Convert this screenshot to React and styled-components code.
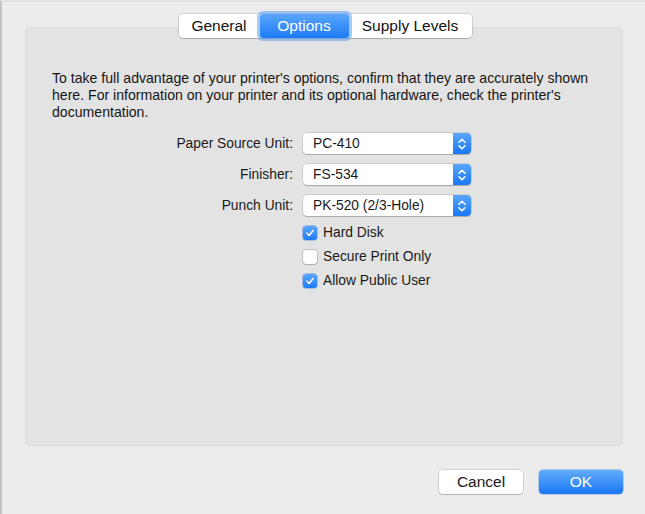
import styled, { createGlobalStyle } from 'styled-components'

const Global = createGlobalStyle`
    html, body {
        margin: 0;
        padding: 0;
        background: #ececec;
    }
    body {
        font-family: "Liberation Sans", Arial, sans-serif;
        color: #1a1a1a;
    }
`

const Window = styled.div`
    width: 645px;
    height: 514px;
    box-sizing: border-box;
    background: #ececec;
    border-top: 2px solid #e0e0e0;
    border-left: 2px solid #c4c4c4;
    padding: 11px 22px 0 23px;
    display: flex;
    flex-direction: column;
    position: relative;
`

const TabBar = styled.div`
    position: absolute;
    top: 12px;
    left: 0;
    right: 0;
    display: flex;
    justify-content: center;
    padding-left: 3px;
`

const Segments = styled.div`
    display: flex;
    height: 24px;
    background: #fff;
    border-radius: 4px;
    box-shadow: 0 0 0 0.5px rgba(0,0,0,0.22), 0 1px 1px rgba(0,0,0,0.15);
`

const Segment = styled.div`
    display: flex;
    align-items: center;
    justify-content: center;
    width: ${p => p.$w}px;
    font-size: 15.5px;
    color: ${p => p.$active ? '#fff' : '#111'};
    background: ${p => p.$active ? 'linear-gradient(#5aa6fb, #1d7cf6)' : 'transparent'};
    border-radius: ${p => p.$active ? '3px' : '0'};
    box-shadow: ${p => p.$active ? '0 0 0 3px rgba(92,158,240,0.55)' : 'none'};
    position: relative;
    z-index: ${p => p.$active ? 1 : 0};
`

const Panel = styled.div`
    margin-top: 14px;
    height: 419px;
    box-sizing: border-box;
    background: #e3e3e3;
    border: 1px solid #dcdcdc;
    border-radius: 5px;
    padding: 42px 20px 0 26px;
`

const Intro = styled.p`
    margin: 0;
    font-size: 14.1px;
    line-height: 17px;
    color: #161616;
`

const Form = styled.div`
    margin-top: 12px;
    display: grid;
    grid-template-columns: 241px 168px;
    column-gap: 10px;
    row-gap: 10px;
    align-items: center;
`

const Label = styled.label`
    text-align: right;
    font-size: 13.8px;
`

const Popup = styled.div`
    height: 21px;
    display: flex;
    background: #fff;
    border-radius: 4px;
    box-shadow: 0 0 0 0.5px rgba(0,0,0,0.2), 0 1px 1px rgba(0,0,0,0.18);
    overflow: hidden;
    font-size: 13.8px;
`

const PopupValue = styled.div`
    flex: 1;
    display: flex;
    align-items: center;
    padding-left: 10px;
`

const PopupArrows = styled.div`
    width: 18px;
    display: flex;
    align-items: center;
    justify-content: center;
    background: linear-gradient(#5aa6fb, #1a78f5);
`

const Checks = styled.div`
    grid-column: 2;
    display: flex;
    flex-direction: column;
    gap: 9px;
    margin-top: -1px;
`

const CheckRow = styled.div`
    display: flex;
    align-items: center;
    gap: 6px;
    font-size: 13.8px;
    height: 15px;
`

const Box = styled.div`
    width: 14px;
    height: 14px;
    box-sizing: border-box;
    border-radius: 3px;
    display: flex;
    align-items: center;
    justify-content: center;
    background: ${p => p.$on ? 'linear-gradient(#5aa6fb, #1d7cf6)' : '#fff'};
    box-shadow: ${p => p.$on ? '0 0 0 0.5px rgba(20,100,220,0.6)' : '0 0 0 0.5px rgba(0,0,0,0.3), 0 1px 1px rgba(0,0,0,0.1)'};
`

const Footer = styled.div`
    display: flex;
    justify-content: flex-end;
    gap: 16px;
    margin-top: 24px;
`

const Button = styled.div`
    width: 84px;
    height: 24px;
    display: flex;
    align-items: center;
    justify-content: center;
    border-radius: 4px;
    font-size: 15.5px;
    color: ${p => p.$primary ? '#fff' : '#1a1a1a'};
    background: ${p => p.$primary ? 'linear-gradient(#62abfb, #1a78f5)' : '#fff'};
    box-shadow: ${p => p.$primary ? '0 0 0 0.5px rgba(20,100,220,0.5)' : '0 0 0 0.5px rgba(0,0,0,0.22), 0 1px 1px rgba(0,0,0,0.15)'};
`

const Arrows = () => (
    <svg width="10" height="14" viewBox="0 0 10 14">
        <path d="M2 5.2 L5 2.2 L8 5.2 M2 8.8 L5 11.8 L8 8.8" fill="none" stroke="#fff" strokeWidth="1.5" strokeLinecap="round" strokeLinejoin="round" />
    </svg>
)

const Tick = () => (
    <svg width="10" height="10" viewBox="0 0 10 10">
        <path d="M2 5.2 L4.2 7.5 L8 2.5" fill="none" stroke="#fff" strokeWidth="1.6" strokeLinecap="round" strokeLinejoin="round" />
    </svg>
)

const Select = ({ label, value }) => (
    <>
        <Label>{label}</Label>
        <Popup>
            <PopupValue>{value}</PopupValue>
            <PopupArrows><Arrows /></PopupArrows>
        </Popup>
    </>
)

const Check = ({ on, children }) => (
    <CheckRow>
        <Box $on={on}>{on && <Tick />}</Box>
        {children}
    </CheckRow>
)

export default function App() {
    return (
        <Window>
            <Global />
            <TabBar>
                <Segments>
                    <Segment $w={81}>General</Segment>
                    <Segment $w={89} $active>Options</Segment>
                    <Segment $w={123}>Supply Levels</Segment>
                </Segments>
            </TabBar>
            <Panel>
                <Intro>
                    To take full advantage of your printer's options, confirm that they are accurately shown
                    here. For information on your printer and its optional hardware, check the printer's
                    documentation.
                </Intro>
                <Form>
                    <Select label="Paper Source Unit:" value="PC-410" />
                    <Select label="Finisher:" value="FS-534" />
                    <Select label="Punch Unit:" value="PK-520 (2/3-Hole)" />
                    <Checks>
                        <Check on>Hard Disk</Check>
                        <Check>Secure Print Only</Check>
                        <Check on>Allow Public User</Check>
                    </Checks>
                </Form>
            </Panel>
            <Footer>
                <Button>Cancel</Button>
                <Button $primary>OK</Button>
            </Footer>
        </Window>
    )
}
